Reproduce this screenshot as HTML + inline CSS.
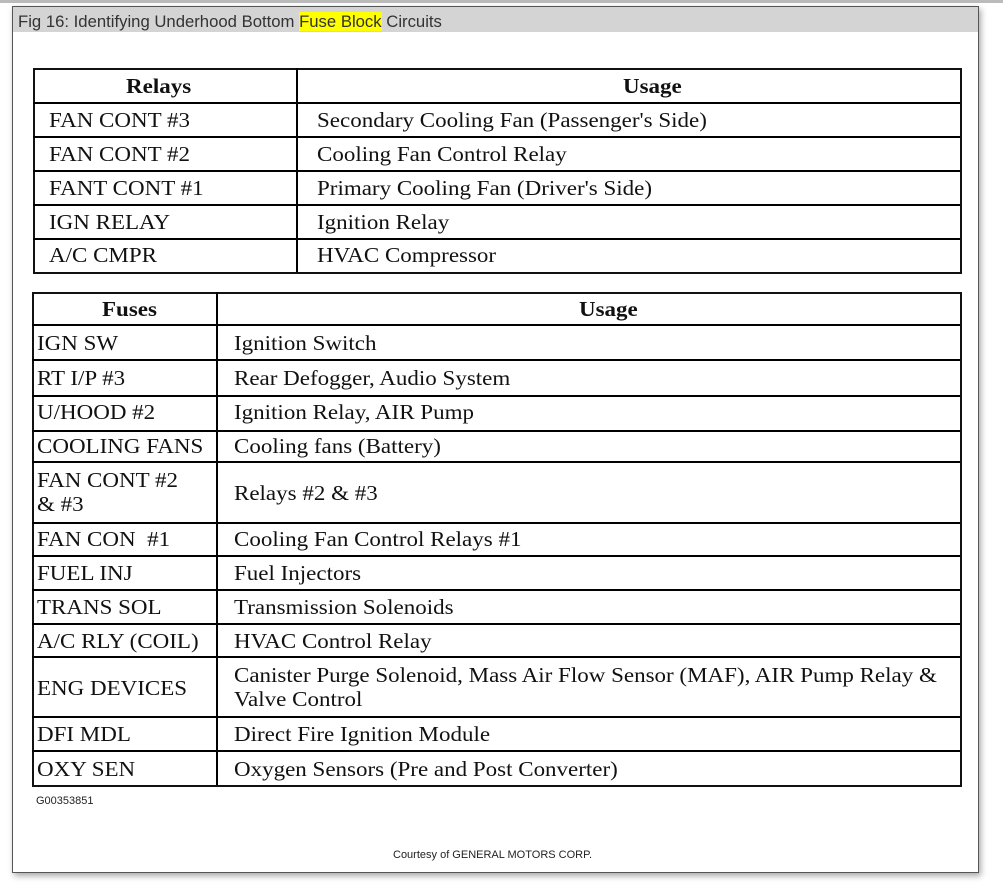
<!DOCTYPE html>
<html><head><style>
body{margin:0;width:1003px;height:890px;background:#fff;position:relative;overflow:hidden;font-family:"Liberation Serif",serif;}
.a{position:absolute}
.t{position:absolute;font-size:21px;color:#111;white-space:nowrap;line-height:24px;transform:scaleX(1.095);transform-origin:0 0}
.h{font-weight:bold;font-size:21px}
.hl{background:#000}
.vl{background:#000}
</style></head><body>
<div class="a" style="left:0;top:0;width:1003px;height:3px;background:#bbb"></div>
<div class="a" style="left:12px;top:6px;width:965px;height:865px;border:1px solid #555;box-shadow:2px 3px 6px #aaa;background:#fff"></div>
<div class="a" style="left:13px;top:7px;width:965px;height:25px;background:#d4d4d4"></div>
<div class="a" style="left:18px;top:12px;font-family:'Liberation Sans',sans-serif;font-size:16.7px;color:#333;line-height:20px">Fig 16: Identifying Underhood Bottom <span style="background:#ff0">Fuse Block</span> Circuits</div>

<div class="a" style="left:33px;top:68px;width:925px;height:202px;border:2px solid #111"></div>
<div class="a vl" style="left:296px;top:68px;width:2px;height:204px"></div>
<div class="a hl" style="left:33px;top:102px;width:927px;height:2px"></div>
<div class="a hl" style="left:33px;top:136px;width:927px;height:2px"></div>
<div class="a hl" style="left:33px;top:170px;width:927px;height:2px"></div>
<div class="a hl" style="left:33px;top:204px;width:927px;height:2px"></div>
<div class="a hl" style="left:33px;top:238px;width:927px;height:2px"></div>
<div class="t h" style="left:126px;top:74px">Relays</div>
<div class="t h" style="left:623px;top:74px">Usage</div>
<div class="t" style="left:49px;top:108px">FAN CONT #3</div><div class="t" style="left:317px;top:108px">Secondary Cooling Fan (Passenger's Side)</div>
<div class="t" style="left:49px;top:142px">FAN CONT #2</div><div class="t" style="left:317px;top:142px">Cooling Fan Control Relay</div>
<div class="t" style="left:49px;top:176px">FANT CONT #1</div><div class="t" style="left:317px;top:176px">Primary Cooling Fan (Driver's Side)</div>
<div class="t" style="left:49px;top:210px">IGN RELAY</div><div class="t" style="left:317px;top:210px">Ignition Relay</div>
<div class="t" style="left:49px;top:243px">A/C CMPR</div><div class="t" style="left:317px;top:243px">HVAC Compressor</div>

<div class="a" style="left:32px;top:292px;width:926px;height:491px;border:2px solid #111"></div>
<div class="a vl" style="left:216px;top:292px;width:2px;height:493px"></div>
<div class="a hl" style="left:32px;top:324px;width:928px;height:2px"></div>
<div class="a hl" style="left:32px;top:359px;width:928px;height:2px"></div>
<div class="a hl" style="left:32px;top:395px;width:928px;height:2px"></div>
<div class="a hl" style="left:32px;top:430px;width:928px;height:2px"></div>
<div class="a hl" style="left:32px;top:461px;width:928px;height:2px"></div>
<div class="a hl" style="left:32px;top:522px;width:928px;height:2px"></div>
<div class="a hl" style="left:32px;top:555px;width:928px;height:2px"></div>
<div class="a hl" style="left:32px;top:589px;width:928px;height:2px"></div>
<div class="a hl" style="left:32px;top:623px;width:928px;height:2px"></div>
<div class="a hl" style="left:32px;top:656px;width:928px;height:2px"></div>
<div class="a hl" style="left:32px;top:716px;width:928px;height:2px"></div>
<div class="a hl" style="left:32px;top:750px;width:928px;height:2px"></div>
<div class="t h" style="left:102px;top:297px">Fuses</div>
<div class="t h" style="left:579px;top:297px">Usage</div>
<div class="t" style="left:37px;top:331px">IGN SW</div><div class="t" style="left:234px;top:331px">Ignition Switch</div>
<div class="t" style="left:37px;top:366px">RT I/P #3</div><div class="t" style="left:234px;top:366px">Rear Defogger, Audio System</div>
<div class="t" style="left:37px;top:400px">U/HOOD #2</div><div class="t" style="left:234px;top:400px">Ignition Relay, AIR Pump</div>
<div class="t" style="left:37px;top:434px">COOLING FANS</div><div class="t" style="left:234px;top:434px">Cooling fans (Battery)</div>
<div class="t" style="left:37px;top:468px">FAN CONT #2<br>&amp; #3</div><div class="t" style="left:234px;top:481px">Relays #2 &amp; #3</div>
<div class="t" style="left:37px;top:527px">FAN CON &nbsp;#1</div><div class="t" style="left:234px;top:527px">Cooling Fan Control Relays #1</div>
<div class="t" style="left:37px;top:561px">FUEL INJ</div><div class="t" style="left:234px;top:561px">Fuel Injectors</div>
<div class="t" style="left:37px;top:595px">TRANS SOL</div><div class="t" style="left:234px;top:595px">Transmission Solenoids</div>
<div class="t" style="left:37px;top:629px">A/C RLY (COIL)</div><div class="t" style="left:234px;top:629px">HVAC Control Relay</div>
<div class="t" style="left:37px;top:676px">ENG DEVICES</div><div class="t" style="left:234px;top:663px">Canister Purge Solenoid, Mass Air Flow Sensor (MAF), AIR Pump Relay &amp;<br>Valve Control</div>
<div class="t" style="left:37px;top:722px">DFI MDL</div><div class="t" style="left:234px;top:722px">Direct Fire Ignition Module</div>
<div class="t" style="left:37px;top:757px">OXY SEN</div><div class="t" style="left:234px;top:757px">Oxygen Sensors (Pre and Post Converter)</div>

<div class="a" style="left:36px;top:795px;font-family:'Liberation Sans',sans-serif;font-size:11px;color:#222">G00353851</div>
<div class="a" style="left:393px;top:849px;font-family:'Liberation Sans',sans-serif;font-size:11px;color:#222">Courtesy of GENERAL MOTORS CORP.</div>
</body></html>
